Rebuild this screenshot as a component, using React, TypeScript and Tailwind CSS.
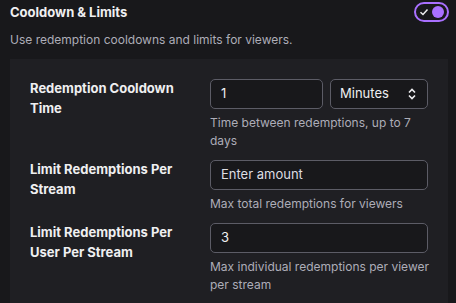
import React from "react";

const rows = [
  {
    label: "Redemption Cooldown Time",
    value: "1",
    placeholder: "",
    select: true,
    help: "Time between redemptions, up to 7 days",
  },
  {
    label: "Limit Redemptions Per Stream",
    value: "",
    placeholder: "Enter amount",
    select: false,
    help: "Max total redemptions for viewers",
  },
  {
    label: "Limit Redemptions Per User Per Stream",
    value: "3",
    placeholder: "",
    select: false,
    help: "Max individual redemptions per viewer per stream",
  },
];

export default function App() {
  return (
    <div
      className="w-[456px] h-[303px] overflow-hidden bg-[#18181b] text-[#efeff1]"
      style={{ fontFamily: "Inter, 'Liberation Sans', sans-serif" }}
    >
      {/* Header */}
      <div className="flex items-start justify-between pl-[10px] pr-[7px] pt-[2px]">
        <h3 className="text-[13px] font-bold leading-[18px] mt-[1px]">Cooldown &amp; Limits</h3>
        <div className="w-[35px] h-[20px] rounded-full border-2 border-[#a970ff] flex items-center justify-between px-[3px]">
          <svg width="10" height="10" viewBox="0 0 10 10" fill="none">
            <path d="M1.5 5.2 L4 7.5 L8.5 2.5" stroke="#efeff1" strokeWidth="1.5" />
          </svg>
          <div className="w-[12px] h-[12px] rounded-full bg-[#a970ff]" />
        </div>
      </div>
      <p className="pl-[10px] mt-[9px] text-[12px] leading-[18px] text-[#adadb8]">
        Use redemption cooldowns and limits for viewers.
      </p>

      {/* Panel */}
      <div className="ml-[10px] mr-[8px] mt-[10px] bg-[#1f1f23] px-[20px] pt-[20px] pb-[20px] flex flex-col gap-[10px]">
        {rows.map((r, i) => (
          <div key={i} className="flex gap-[20px]">
            <div className="w-[160px] shrink-0 text-[13px] font-bold leading-[20px] -mt-[1px]">
              {r.label}
            </div>
            <div className="flex-1 flex flex-col">
              <div className="flex gap-[7px]">
                <div className="flex-1 h-[30px] rounded-[5px] border border-[#5c5c66] bg-[#18181b] flex items-center px-[10px] text-[13px]">
                  {r.value ? (
                    <span className="text-[#efeff1]">{r.value}</span>
                  ) : (
                    <span className="text-[#dedee3]">{r.placeholder}</span>
                  )}
                </div>
                {r.select && (
                  <div className="w-[98px] h-[30px] rounded-[5px] border border-[#5c5c66] bg-[#18181b] flex items-center justify-between pl-[9px] pr-[10px] text-[13px]">
                    <span>Minutes</span>
                    <svg width="10" height="12" viewBox="0 0 10 12" fill="none">
                      <path d="M2 4.5 L5 1.5 L8 4.5 M2 7.5 L5 10.5 L8 7.5" stroke="#efeff1" strokeWidth="1.6" />
                    </svg>
                  </div>
                )}
              </div>
              <p className="mt-[5px] -mr-[6px] text-[12px] leading-[18px] text-[#adadb8]">{r.help}</p>
            </div>
          </div>
        ))}
      </div>
    </div>
  );
}
